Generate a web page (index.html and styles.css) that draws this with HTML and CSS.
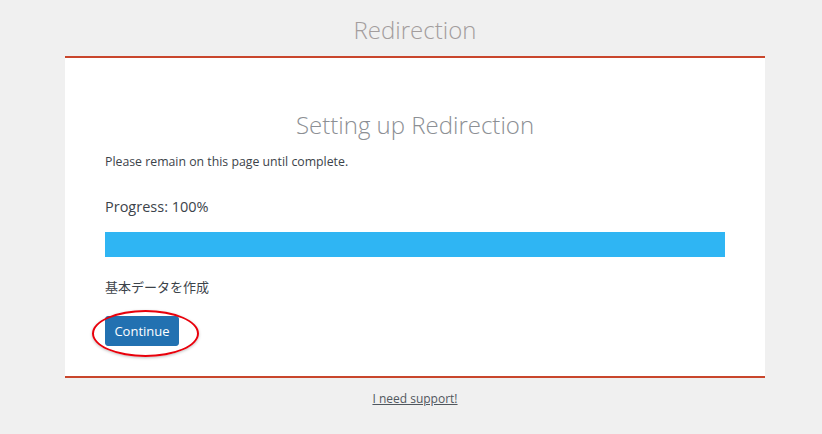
FILE: index.html
```html
<!DOCTYPE html>
<html lang="en">
<head>
    <meta charset="UTF-8">
    <title>Redirection</title>
    <link rel="stylesheet" href="styles.css">
</head>
<body>
    <!-- Page title -->
    <h1 class="page-title">Redirection</h1>

    <!-- Setup card -->
    <div class="setup-card">
        <h2 class="setup-heading">Setting up Redirection</h2>
        <p class="setup-note">Please remain on this page until complete.</p>

        <p class="progress-label">Progress: 100%</p>
        <div class="progress-track">
            <div class="progress-fill" style="width: 100%"></div>
        </div>

        <p class="setup-step">基本データを作成</p>

        <div class="button-wrap">
            <button class="continue-button">Continue</button>
            <span class="highlight-ring"></span>
        </div>
    </div>

    <p class="support"><a href="#">I need support!</a></p>
</body>
</html>
```

FILE: styles.css
```css
/* Basic Styling */
body {
    margin: 0;
    padding-left: 8px;
    background-color: #f0f0f0;
    font-family: "Open Sans", "Noto Sans CJK JP", sans-serif;
    color: #3c434a;
    overflow: hidden;
}

.page-title {
    margin: 0;
    padding-top: 14px;
    height: 56px;
    box-sizing: border-box;
    text-align: center;
    font-size: 24px;
    font-weight: 300;
    color: #a39d9d;
    line-height: 32px;
}

/* Card */
.setup-card {
    width: 700px;
    height: 322px;
    margin: 0 auto;
    padding: 51px 40px 30px;
    box-sizing: border-box;
    background: #fff;
    border-top: 2px solid #c9462c;
    border-bottom: 2px solid #c9462c;
}

.setup-heading {
    margin: 0;
    text-align: center;
    font-size: 24px;
    font-weight: 300;
    color: #8c8f94;
    line-height: 32px;
}

.setup-note {
    margin: 12px 0 0;
    font-size: 12.3px;
    line-height: 18px;
}

.progress-label {
    margin: 26px 0 0;
    font-size: 14.5px;
    line-height: 20px;
}

.progress-track {
    margin-top: 15px;
    height: 25px;
    background: #f0f0f1;
}

.progress-fill {
    height: 100%;
    background: #2fb5f3;
}

.setup-step {
    margin: 21px 0 0;
    font-size: 13px;
    line-height: 18px;
}

/* Continue button */
.button-wrap {
    position: relative;
    display: inline-block;
    margin-top: 20px;
}

.continue-button {
    display: block;
    width: 74px;
    height: 30px;
    padding: 0;
    border: 1px solid #2271b1;
    border-radius: 3px;
    background: #2271b1;
    color: #fff;
    font-family: inherit;
    font-size: 13px;
    cursor: pointer;
}

.highlight-ring {
    position: absolute;
    left: -13px;
    top: -6px;
    width: 107px;
    height: 47px;
    border: 2px solid #e8000b;
    border-radius: 50%;
    box-sizing: border-box;
    box-shadow: 0 1px 3px rgba(0, 0, 0, 0.25);
}

.support {
    margin: 12px 0 0;
    text-align: center;
    font-size: 12px;
}

.support a {
    color: #50575e;
}
```
